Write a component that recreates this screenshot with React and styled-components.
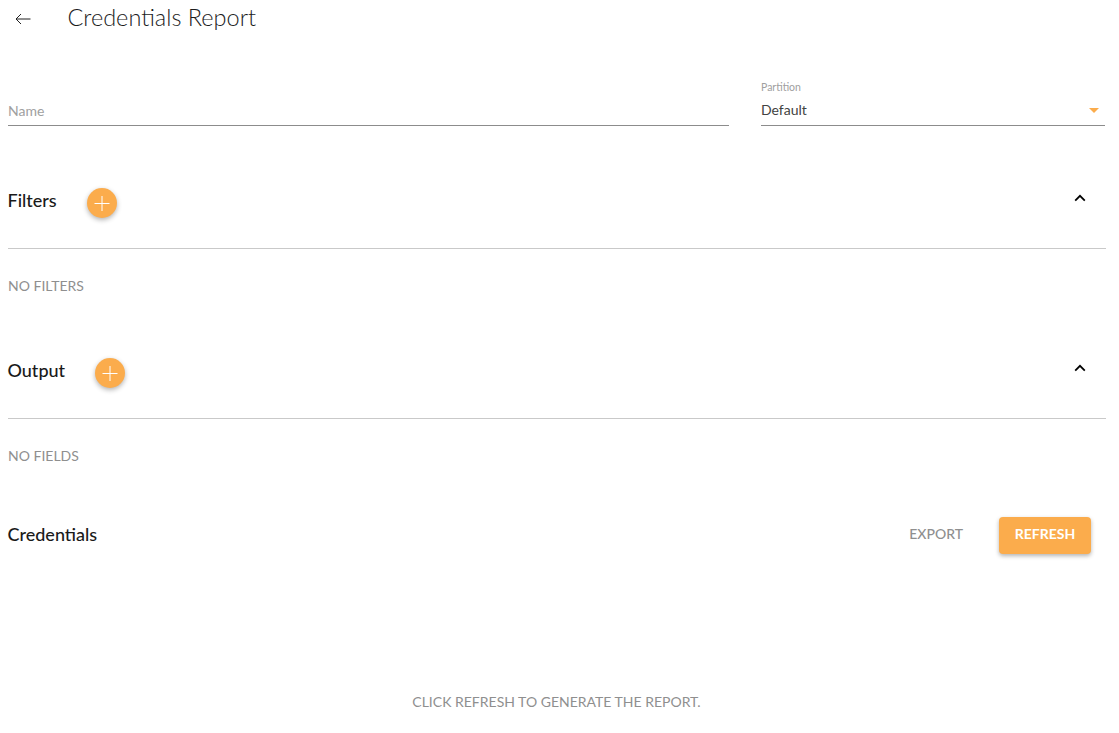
import React from 'react';
import styled, { createGlobalStyle } from 'styled-components';

const GlobalStyle = createGlobalStyle`
  html, body {
    margin: 0;
    padding: 0;
    background: #fff;
    font-family: Lato, "Liberation Sans", sans-serif;
  }
  * { box-sizing: border-box; }
`;

const Page = styled.div`
  width: 1119px;
  height: 733px;
  overflow: hidden;
  padding-right: 13px;
  color: #212121;
`;

const TitleBar = styled.header`
  display: flex;
  align-items: center;
  height: 38px;
`;

const BackButton = styled.button`
  width: 46px;
  height: 38px;
  margin-right: 21.5px;
  padding: 0;
  border: 0;
  background: none;
  display: flex;
  align-items: center;
  justify-content: center;
`;

const Title = styled.h1`
  margin: 0 0 5px;
  font-size: 23.5px;
  font-weight: 300;
  color: #1c1c1c;
`;

const FormRow = styled.div`
  display: flex;
  gap: 32px;
  margin-top: 38px;
  margin-bottom: 27px;
  padding-left: 8px;
`;

const Field = styled.div`
  flex: ${p => p.$wide ? '0 0 721px' : '0 0 344px'};
  height: 50px;
  display: flex;
  flex-direction: column;
  justify-content: flex-end;
  border-bottom: 1px solid #8c8c8c;
`;

const FieldLabel = styled.label`
  font-size: 10.5px;
  line-height: 14px;
  color: #a0a0a0;
`;

const Placeholder = styled.span`
  font-size: 14px;
  line-height: 20px;
  padding-bottom: 4px;
  color: #a0a0a0;
`;

const SelectValue = styled.div`
  display: flex;
  align-items: center;
  justify-content: space-between;
  margin-top: 6px;
  padding-bottom: 5px;
  font-size: 14px;
  line-height: 20px;
  color: #424242;
`;

const Caret = styled.span`
  width: 0;
  height: 0;
  margin-right: 6px;
  border-left: 5px solid transparent;
  border-right: 5px solid transparent;
  border-top: 5px solid #fbac4c;
`;

const Section = styled.section`
  margin-left: 8px;
`;

const SectionHead = styled.div`
  height: 96px;
  display: flex;
  align-items: center;
  padding-top: 27px;
  padding-bottom: 26px;
  border-bottom: 1px solid #c9c9c9;
`;

const SectionTitle = styled.h2`
  margin: 0 ${p => p.$gap}px 2px -0.5px;
  font-size: 18px;
  font-weight: 500;
  line-height: 24px;
  color: #1a1a1a;
`;

const AddButton = styled.button`
  width: 30px;
  height: 30px;
  padding: 0;
  margin-top: 4px;
  border: 0;
  border-radius: 50%;
  background: #fbac4c;
  box-shadow: 0 2px 5px rgba(0, 0, 0, 0.3);
  display: flex;
  align-items: center;
  justify-content: center;
`;

const CollapseButton = styled.button`
  width: 24px;
  height: 24px;
  margin-left: auto;
  margin-right: 14px;
  margin-bottom: 6px;
  padding: 0;
  border: 0;
  background: none;
  display: flex;
  align-items: center;
  justify-content: center;
`;

const EmptyNote = styled.p`
  margin: 0;
  height: 74px;
  padding-top: 28px;
  font-size: 14px;
  line-height: 18px;
  color: #8f8f8f;
`;

const ResultsHead = styled.div`
  display: flex;
  align-items: center;
  height: 37px;
  margin: 24px 15px 0 7.5px;
`;

const ResultsTitle = styled.h2`
  margin: 0 0 3px;
  flex: 1;
  font-size: 18px;
  font-weight: 500;
  color: #1a1a1a;
`;

const ExportButton = styled.button`
  margin: 0 36px 5px 0;
  padding: 0;
  border: 0;
  background: none;
  font: 500 14px Lato, sans-serif;
  color: #8f8f8f;
`;

const RefreshButton = styled.button`
  width: 92px;
  height: 37px;
  padding: 0 0 4px;
  border: 0;
  border-radius: 4px;
  background: #fbac4c;
  box-shadow: 0 2px 4px rgba(0, 0, 0, 0.3);
  font: 700 14px Lato, sans-serif;
  color: #fff;
`;

const Hint = styled.p`
  margin: 139px 0 0;
  padding-left: 7px;
  text-align: center;
  font-size: 14px;
  line-height: 18px;
  color: #8f8f8f;
`;

const Plus = () => (
  <svg width="16" height="16" viewBox="0 0 16 16">
    <path d="M8 1V16M0.5 8.5H15.5" stroke="#fff" strokeWidth="1" fill="none" />
  </svg>
);

const Chevron = () => (
  <svg width="12" height="8" viewBox="0 0 12 8">
    <path d="M1.2 6.6L6 1.8L10.8 6.6" stroke="#000" strokeWidth="1.8" fill="none" />
  </svg>
);

const sections = [
  { title: 'Filters', gap: 30.5, note: 'NO FILTERS' },
  { title: 'Output', gap: 29.5, note: 'NO FIELDS' },
];

const App = () => (
  <Page>
    <GlobalStyle />
    <TitleBar>
      <BackButton aria-label="Back">
        <svg width="16" height="12" viewBox="0 0 16 12">
          <path d="M15.5 6H1M6 1L1 6L6 11" stroke="#212121" strokeWidth="1" fill="none" />
        </svg>
      </BackButton>
      <Title>Credentials Report</Title>
    </TitleBar>

    <FormRow>
      <Field $wide>
        <Placeholder>Name</Placeholder>
      </Field>
      <Field>
        <FieldLabel>Partition</FieldLabel>
        <SelectValue>
          Default
          <Caret />
        </SelectValue>
      </Field>
    </FormRow>

    {sections.map(s => (
      <Section key={s.title}>
        <SectionHead>
          <SectionTitle $gap={s.gap}>{s.title}</SectionTitle>
          <AddButton aria-label={`Add ${s.title}`}><Plus /></AddButton>
          <CollapseButton aria-label="Collapse"><Chevron /></CollapseButton>
        </SectionHead>
        <EmptyNote>{s.note}</EmptyNote>
      </Section>
    ))}

    <ResultsHead>
      <ResultsTitle>Credentials</ResultsTitle>
      <ExportButton>EXPORT</ExportButton>
      <RefreshButton>REFRESH</RefreshButton>
    </ResultsHead>

    <Hint>CLICK REFRESH TO GENERATE THE REPORT.</Hint>
  </Page>
);

export default App;
